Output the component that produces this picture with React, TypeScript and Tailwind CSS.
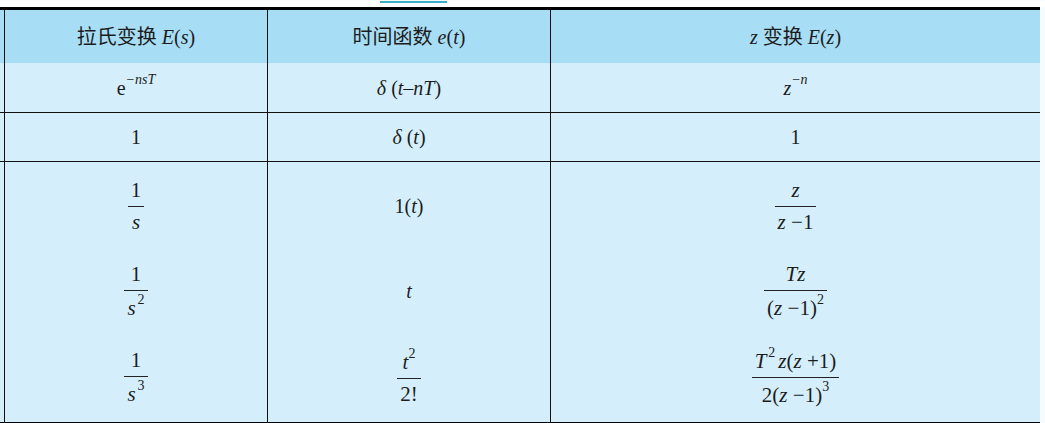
import type { ReactNode } from 'react';

const serif = 'font-["Liberation_Serif","Noto_Sans_CJK_SC",serif]';

function I({ children }: { children: ReactNode }) {
  return <span className="italic">{children}</span>;
}

function Sup({ children, gap = false }: { children: ReactNode; gap?: boolean }) {
  return (
    <sup className={`text-[14px] relative -top-[3px] align-super leading-none ${gap ? 'ml-[2px]' : ''}`}>
      {children}
    </sup>
  );
}

function Frac({ num, den }: { num: ReactNode; den: ReactNode }) {
  return (
    <span className="inline-flex flex-col items-center leading-none text-[21px]">
      <span className="pb-[5px] px-[3px]">{num}</span>
      <span className="self-stretch border-t border-[#222]" />
      <span className="pt-[5px] px-[3px]">{den}</span>
    </span>
  );
}

function Cell({ children, className = '' }: { children?: ReactNode; className?: string }) {
  return (
    <div className={`border-l border-[#111] flex items-center justify-center ${className}`}>
      {children}
    </div>
  );
}

function Row({ cells, className = '' }: { cells: ReactNode[]; className?: string }) {
  return (
    <div className={`flex ${className}`}>
      <div className="w-[4px]" />
      <Cell className="w-[263px]">{cells[0]}</Cell>
      <Cell className="w-[283px]">{cells[1]}</Cell>
      <Cell className="w-[490px]">{cells[2]}</Cell>
    </div>
  );
}

const stack = [
  [
    <Frac num="1" den={<I>s</I>} />,
    <span>1(<I>t</I>)</span>,
    <Frac num={<I>z</I>} den={<span><I>z</I> −1</span>} />,
  ],
  [
    <Frac num="1" den={<span><I>s</I><Sup gap>2</Sup></span>} />,
    <I>t</I>,
    <Frac num={<I>Tz</I>} den={<span>(<I>z</I> −1)<Sup>2</Sup></span>} />,
  ],
  [
    <Frac num="1" den={<span><I>s</I><Sup gap>3</Sup></span>} />,
    <Frac num={<span><I>t</I><Sup>2</Sup></span>} den="2!" />,
    <Frac
      num={<span><I>T</I><Sup gap>2</Sup><span className="ml-[3px]"><I>z</I></span>(<I>z</I> +1)</span>}
      den={<span>2(<I>z</I> −1)<Sup>3</Sup></span>}
    />,
  ],
];

const widths = ['w-[263px]', 'w-[283px]', 'w-[490px]'];
const heights = ['h-[88px]', 'h-[82px]', 'h-[90px]'];

export default function App() {
  return (
    <div className={`w-[1045px] h-[423px] bg-[#f7fbfd] overflow-hidden text-[20px] text-[#1c1c1c] ${serif}`}>
      <div className="h-[6px] bg-white">
        <div className="ml-[380px] w-[67px] h-[2px] mt-px bg-[#3aaec2]" />
      </div>
      <div className="w-[1040px] border-t-[3px] border-b-2 border-black">
        <Row
          className="h-[53px] bg-[#a8def5]"
          cells={[
            <span>拉氏变换 <I>E</I>(<I>s</I>)</span>,
            <span>时间函数 <I>e</I>(<I>t</I>)</span>,
            <span><I>z</I> 变换 <I>E</I>(<I>z</I>)</span>,
          ]}
        />
        <div className="bg-[#d4effb]">
          <Row
            className="h-[50px] border-b border-[#111]"
            cells={[
              <span>e<Sup><I>−nsT</I></Sup></span>,
              <span><I>δ</I> (<I>t</I>–<I>nT</I>)</span>,
              <span><I>z</I><Sup><I>−n</I></Sup></span>,
            ]}
          />
          <Row
            className="h-[49px] border-b border-[#111]"
            cells={[
              <span>1</span>,
              <span><I>δ</I> (<I>t</I>)</span>,
              <span>1</span>,
            ]}
          />
          <div className="flex">
            <div className="w-[4px]" />
            {widths.map((w, col) => (
              <div key={col} className={`border-l border-[#111] flex flex-col ${w}`}>
                {stack.map((r, i) => (
                  <div key={i} className={`${heights[i]} flex items-center justify-center`}>
                    {r[col]}
                  </div>
                ))}
              </div>
            ))}
          </div>
        </div>
      </div>
    </div>
  );
}
